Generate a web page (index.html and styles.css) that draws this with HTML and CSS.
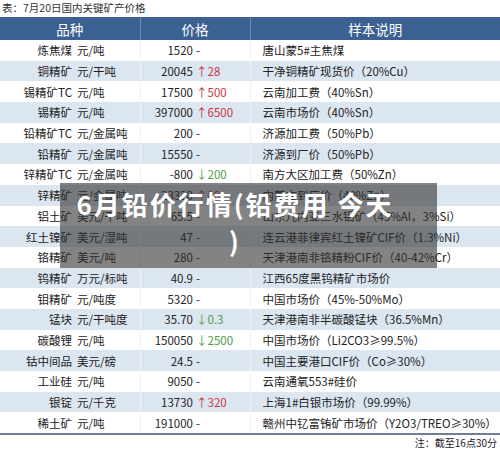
FILE: index.html
```html
<!DOCTYPE html>
<html lang="zh-CN">
  <head>
    <meta charset="UTF-8" />
    <meta name="viewport" content="width=device-width, initial-scale=1.0" />
    <title>7月20日国内关键矿产价格</title>
    <link rel="stylesheet" href="styles.css">
  </head>
  <body>
    <div class="page">
      <p class="caption">表：7月20日国内关键矿产价格</p>

      <table class="prices">
        <colgroup>
          <col class="c-name" />
          <col class="c-unit" />
          <col class="c-price" />
          <col class="c-change" />
          <col class="c-sample" />
        </colgroup>
        <thead>
          <tr>
            <th colspan="2">品种</th>
            <th colspan="2">价格</th>
            <th>样本说明</th>
          </tr>
        </thead>
        <tbody>
          <tr><td class="name">炼焦煤</td><td class="unit">元/吨</td><td class="price">1520</td><td class="change">-</td><td class="sample">唐山蒙5#主焦煤</td></tr>
          <tr><td class="name">铜精矿</td><td class="unit">元/干吨</td><td class="price">20045</td><td class="change up">↑28</td><td class="sample">干净铜精矿现货价（20%Cu）</td></tr>
          <tr><td class="name">锡精矿TC</td><td class="unit">元/吨</td><td class="price">17500</td><td class="change up">↑500</td><td class="sample">云南加工费（40%Sn）</td></tr>
          <tr><td class="name">锡精矿</td><td class="unit">元/吨</td><td class="price">397000</td><td class="change up">↑6500</td><td class="sample">云南市场价（40%Sn）</td></tr>
          <tr><td class="name">铅精矿TC</td><td class="unit">元/金属吨</td><td class="price">200</td><td class="change">-</td><td class="sample">济源加工费（50%Pb）</td></tr>
          <tr><td class="name">铅精矿</td><td class="unit">元/金属吨</td><td class="price">15550</td><td class="change">-</td><td class="sample">济源到厂价（50%Pb）</td></tr>
          <tr><td class="name">锌精矿TC</td><td class="unit">元/金属吨</td><td class="price">-800</td><td class="change down">↓200</td><td class="sample">南方大区加工费（50%Zn）</td></tr>
          <tr><td class="name">锌精矿</td><td class="unit">元/金属吨</td><td class="price">23320</td><td class="change up">↑80</td><td class="sample">内蒙古到厂价（40%Zn）</td></tr>
          <tr><td class="name">铝土矿</td><td class="unit">美元/干吨</td><td class="price">65.5</td><td class="change">-</td><td class="sample">山东几内亚三水铝矿（45%Al，3%Si）</td></tr>
          <tr><td class="name">红土镍矿</td><td class="unit">美元/湿吨</td><td class="price">47</td><td class="change">-</td><td class="sample">连云港菲律宾红土镍矿CIF价（1.3%Ni）</td></tr>
          <tr><td class="name">铬精矿</td><td class="unit">美元/吨</td><td class="price">280</td><td class="change">-</td><td class="sample">天津港南非铬精粉CIF价（40-42%Cr）</td></tr>
          <tr><td class="name">钨精矿</td><td class="unit">万元/标吨</td><td class="price">40.9</td><td class="change">-</td><td class="sample">江西65度黑钨精矿市场价</td></tr>
          <tr><td class="name">钼精矿</td><td class="unit">元/吨度</td><td class="price">5320</td><td class="change">-</td><td class="sample">中国市场价（45%-50%Mo）</td></tr>
          <tr><td class="name">锰块</td><td class="unit">元/干吨度</td><td class="price">35.70</td><td class="change down">↓0.3</td><td class="sample">天津港南非半碳酸锰块（36.5%Mn）</td></tr>
          <tr><td class="name">碳酸锂</td><td class="unit">元/吨</td><td class="price">150050</td><td class="change down">↓2500</td><td class="sample">中国市场价（Li2CO3≥99.5%）</td></tr>
          <tr><td class="name">钴中间品</td><td class="unit">美元/磅</td><td class="price">24.5</td><td class="change">-</td><td class="sample">中国主要港口CIF价（Co≥30%）</td></tr>
          <tr><td class="name">工业硅</td><td class="unit">元/吨</td><td class="price">9050</td><td class="change">-</td><td class="sample">云南通氧553#硅价</td></tr>
          <tr><td class="name">银锭</td><td class="unit">元/千克</td><td class="price">13730</td><td class="change up">↑320</td><td class="sample">上海1#白银市场价（99.99%）</td></tr>
          <tr><td class="name">稀土矿</td><td class="unit">元/吨</td><td class="price">191000</td><td class="change">-</td><td class="sample">赣州中钇富铕矿市场价（Y2O3/TREO≥30%）</td></tr>
        </tbody>
      </table>

      <p class="note">注：截至16点30分</p>

      <div class="headline">6月铅价行情(铅费用 今天<br />)</div>
    </div>
  </body>
</html>
```

FILE: styles.css
```css
body {
  margin: 0;
  background-color: #fff;
  color: #222;
  font-family: "Noto Sans CJK SC", "Noto Sans", sans-serif;
}
.page {
  position: relative;
  width: 500px;
  height: 450px;
  overflow: hidden;
}
.caption {
  margin: 0;
  height: 17px;
  padding-left: 2px;
  font-size: 10.5px;
  line-height: 16px;
  color: #333;
}
.prices {
  width: 500px;
  border-collapse: collapse;
  table-layout: fixed;
  font-size: 11.5px;
}
.c-name {
  width: 75px;
}
.c-unit {
  width: 65px;
}
.c-price {
  width: 53px;
}
.c-change {
  width: 57px;
}
.prices th {
  height: 23px;
  padding: 0;
  background-color: #3b6192;
  color: #fff;
  font-weight: normal;
  font-size: 13.5px;
  border-left: 1px solid #6f8db3;
}
.prices th:first-child {
  border-left: none;
}
.prices td {
  height: 20.7px;
  padding: 0;
  line-height: 14px;
  white-space: nowrap;
}
.prices tbody tr:nth-child(even) td {
  background-color: #dce6f1;
}
.prices tbody tr:last-child td {
  border-bottom: 2px solid #6b7f98;
}
.name {
  text-align: right;
  padding-right: 3px !important;
}
.unit {
  padding-left: 2px !important;
  border-right: 1px solid #eef2f7;
}
.price {
  text-align: right;
}
.change {
  padding-left: 3px !important;
  border-right: 1px solid #eef2f7;
}
.up {
  color: #cc3340;
}
.down {
  color: #4e9a45;
}
.sample {
  padding-left: 12px !important;
}
.note {
  margin: 0;
  padding-right: 3px;
  text-align: right;
  font-size: 10px;
  line-height: 16px;
  color: #222;
}
.headline {
  position: absolute;
  left: 60px;
  top: 183px;
  width: 377px;
  height: 85px;
  box-sizing: border-box;
  padding: 2px 36px 0 9px;
  background-color: rgba(48, 48, 48, 0.6);
  color: #fff;
  font-size: 26px;
  font-weight: bold;
  letter-spacing: 2px;
  line-height: 37px;
  text-align: center;
}
```
